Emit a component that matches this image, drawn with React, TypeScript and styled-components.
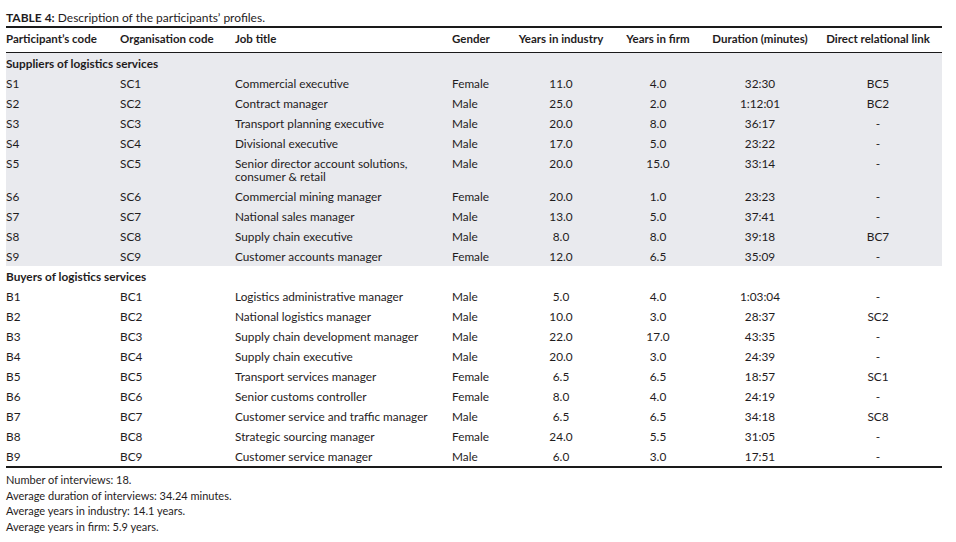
import React, { FC } from 'react'
import styled, { createGlobalStyle } from 'styled-components'

const GlobalStyle = createGlobalStyle`
  body {
    margin: 0;
    background: #ffffff;
    font-family: Lato, 'Liberation Sans', sans-serif;
    color: #1f1c1d;
  }
`

const COLUMNS = '114px 115px 217px 60px 98px 96px 108px 128px'

const Page = styled.div`
  padding: 11px 0 0 6px;
  width: 936px;
`
const Caption = styled.div`
  font-size: 12px;
  line-height: 14px;
  margin-bottom: 1px;
`
const CaptionLabel = styled.span`
  font-weight: bold;
`
const Table = styled.div`
  border-top: 2px solid #1a1a1a;
  border-bottom: 2px solid #1a1a1a;
`
const HeaderRow = styled.div`
  display: grid;
  grid-template-columns: ${COLUMNS};
  padding: 4px 0 7px;
  border-bottom: 1px solid #1a1a1a;
  font-size: 11.5px;
  font-weight: bold;
  line-height: 13px;
`
const Band = styled.div<{ $shaded?: boolean }>`
  background: ${(p) => (p.$shaded ? '#e9eaee' : 'transparent')};
`
const GroupTitle = styled.div`
  padding: 4px 0 3px;
  font-size: 11.8px;
  font-weight: bold;
  line-height: 13px;
`
const Row = styled.div`
  display: grid;
  grid-template-columns: ${COLUMNS};
  padding: 4px 0 3px;
  font-size: 11.8px;
  line-height: 13px;
`
const Cell = styled.div<{ $center?: boolean }>`
  text-align: ${(p) => (p.$center ? 'center' : 'left')};
  white-space: pre-line;
`
const Notes = styled.div`
  padding-top: 4px;
  font-size: 11px;
  line-height: 15.7px;
`

type Participant = [string, string, string, string, string, string, string, string]

const suppliers: Participant[] = [
  ['S1', 'SC1', 'Commercial executive', 'Female', '11.0', '4.0', '32:30', 'BC5'],
  ['S2', 'SC2', 'Contract manager', 'Male', '25.0', '2.0', '1:12:01', 'BC2'],
  ['S3', 'SC3', 'Transport planning executive', 'Male', '20.0', '8.0', '36:17', '-'],
  ['S4', 'SC4', 'Divisional executive', 'Male', '17.0', '5.0', '23:22', '-'],
  ['S5', 'SC5', 'Senior director account solutions,\nconsumer & retail', 'Male', '20.0', '15.0', '33:14', '-'],
  ['S6', 'SC6', 'Commercial mining manager', 'Female', '20.0', '1.0', '23:23', '-'],
  ['S7', 'SC7', 'National sales manager', 'Male', '13.0', '5.0', '37:41', '-'],
  ['S8', 'SC8', 'Supply chain executive', 'Male', '8.0', '8.0', '39:18', 'BC7'],
  ['S9', 'SC9', 'Customer accounts manager', 'Female', '12.0', '6.5', '35:09', '-'],
]

const buyers: Participant[] = [
  ['B1', 'BC1', 'Logistics administrative manager', 'Male', '5.0', '4.0', '1:03:04', '-'],
  ['B2', 'BC2', 'National logistics manager', 'Male', '10.0', '3.0', '28:37', 'SC2'],
  ['B3', 'BC3', 'Supply chain development manager', 'Male', '22.0', '17.0', '43:35', '-'],
  ['B4', 'BC4', 'Supply chain executive', 'Male', '20.0', '3.0', '24:39', '-'],
  ['B5', 'BC5', 'Transport services manager', 'Female', '6.5', '6.5', '18:57', 'SC1'],
  ['B6', 'BC6', 'Senior customs controller', 'Female', '8.0', '4.0', '24:19', '-'],
  ['B7', 'BC7', 'Customer service and traffic manager', 'Male', '6.5', '6.5', '34:18', 'SC8'],
  ['B8', 'BC8', 'Strategic sourcing manager', 'Female', '24.0', '5.5', '31:05', '-'],
  ['B9', 'BC9', 'Customer service manager', 'Male', '6.0', '3.0', '17:51', '-'],
]

const headers = [
  'Participant’s code',
  'Organisation code',
  'Job title',
  'Gender',
  'Years in industry',
  'Years in firm',
  'Duration (minutes)',
  'Direct relational link',
]

const Group: FC<{ title: string; rows: Participant[]; shaded?: boolean }> = ({ title, rows, shaded }) => (
  <Band $shaded={shaded}>
    <GroupTitle>{title}</GroupTitle>
    {rows.map((r) => (
      <Row key={r[0]}>
        {r.map((v, i) => (
          <Cell key={i} $center={i >= 4}>
            {v}
          </Cell>
        ))}
      </Row>
    ))}
  </Band>
)

const App: FC = () => {
  return (
    <Page>
      <GlobalStyle />
      <Caption>
        <CaptionLabel>TABLE 4:</CaptionLabel> Description of the participants’ profiles.
      </Caption>
      <Table>
        <HeaderRow>
          {headers.map((h, i) => (
            <Cell key={h} $center={i >= 4}>
              {h}
            </Cell>
          ))}
        </HeaderRow>
        <Group title="Suppliers of logistics services" rows={suppliers} shaded />
        <Group title="Buyers of logistics services" rows={buyers} />
      </Table>
      <Notes>
        <div>Number of interviews: 18.</div>
        <div>Average duration of interviews: 34.24 minutes.</div>
        <div>Average years in industry: 14.1 years.</div>
        <div>Average years in firm: 5.9 years.</div>
      </Notes>
    </Page>
  )
}

export default App
